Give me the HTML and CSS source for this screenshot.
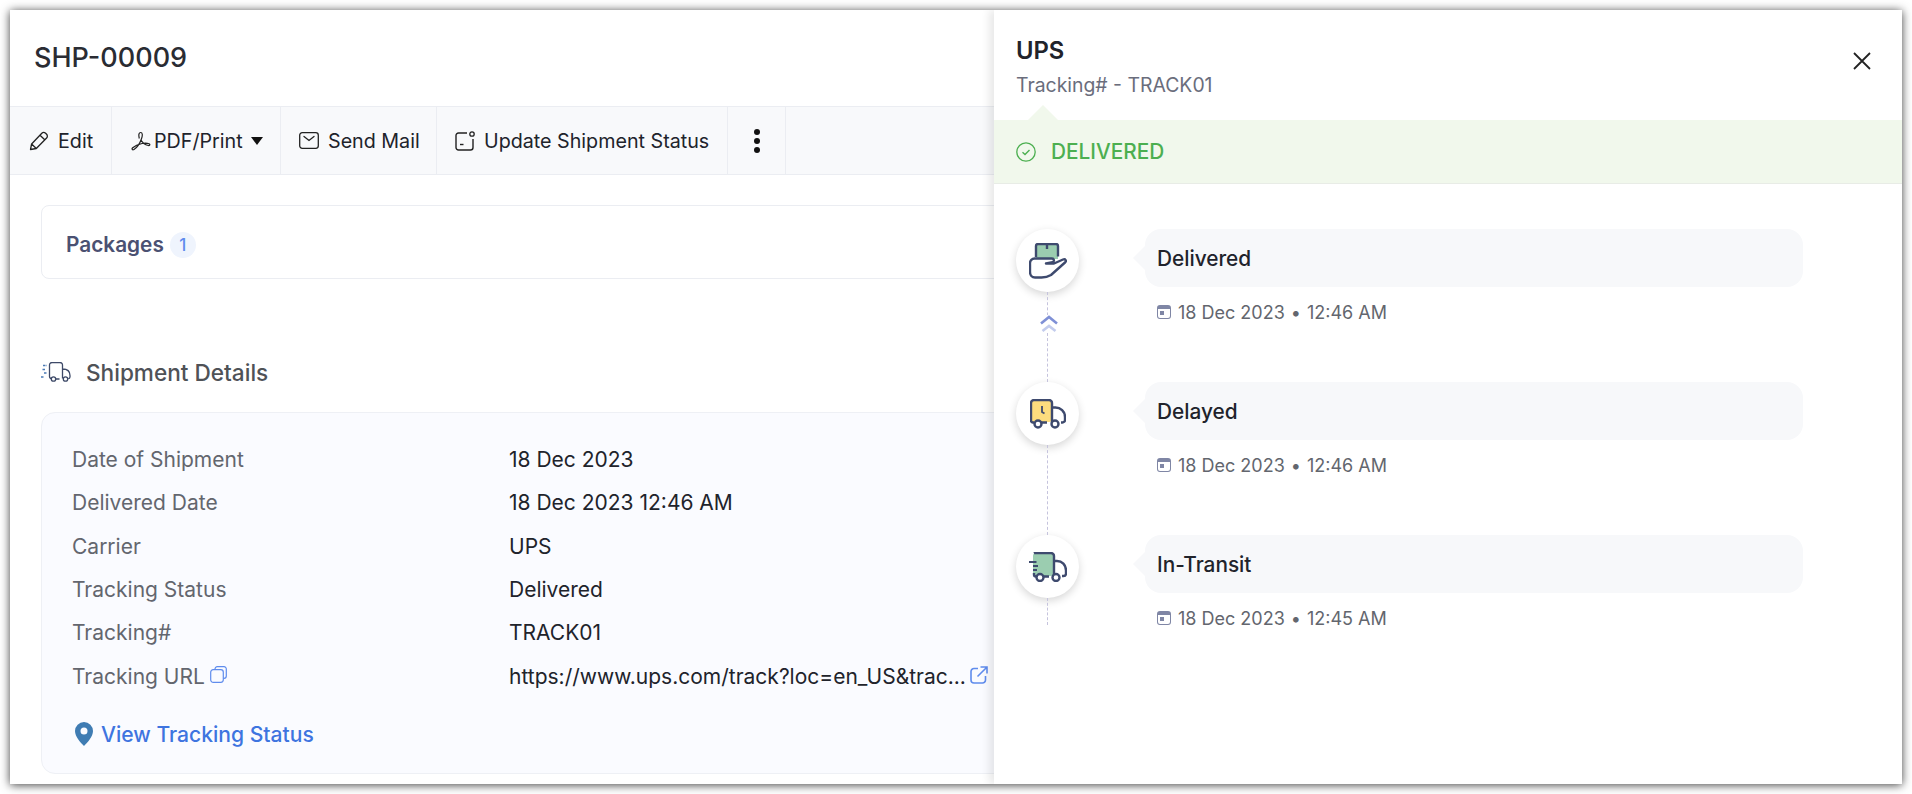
FILE: index.html
```html
<!DOCTYPE html>
<html lang="en">
<head>
  <meta charset="UTF-8">
  <title>SHP-00009</title>
  <link rel="stylesheet" href="styles.css">
</head>
<body>

<div class="window">
  <div class="page">
    <h1 class="page-title">SHP-00009</h1>

    <div class="toolbar">
      <div class="tool tool-edit">
        <svg class="tool-icon" width="20" height="20" viewBox="0 0 20 20"><path d="M1.500 18.500 2.600 13 12.800 2.300c1-1 2.700-1 3.800 0l1 1c1 1 1 2.700 0 3.700L7.300 17.500 1.500 18.500ZM2.600 13l4.700 4.500M11 4.200l5 4.800" fill="none" stroke="#222" stroke-width="1.300" stroke-linejoin="round"/></svg>
        Edit
      </div>
      <div class="tool tool-pdf">
        <svg class="pdf-icon" width="20" height="20" viewBox="0 0 20 20"><path d="M8.300 7.500C7.300 3.500 8 1.500 9.700 1.500s2.200 2.500.7 6.500C9 12 6 16.500 3 18.500c-1.500 1-2.700-.5-1.300-1.800 2-1.800 6-3.500 9.300-4.200 2.500-.5 5-.5 7 .3 1.500.6.700 2-.8 1.700-3-.6-6-3-7.500-6" fill="none" stroke="#222" stroke-width="1.200" stroke-linejoin="round"/></svg>
        PDF/Print
        <span class="caret"></span>
      </div>
      <div class="tool tool-mail">
        <svg class="tool-icon" width="20" height="18" viewBox="0 0 20 18"><rect x=".7" y=".7" width="18.600" height="15.600" rx="2.500" fill="none" stroke="#222" stroke-width="1.300"/><path d="M5 4.500 10 8.500 15 4.500" fill="none" stroke="#222" stroke-width="1.300" stroke-linecap="round"/></svg>
        Send Mail
      </div>
      <div class="tool tool-status">
        <svg class="tool-icon" width="20" height="20" viewBox="0 0 20 20"><path d="M12 2H3.500A2.500 2.500 0 0 0 1 4.500v12A2.500 2.500 0 0 0 3.500 19h12a2.500 2.500 0 0 0 2.500-2.500V8" fill="none" stroke="#222" stroke-width="1.400"/><circle cx="17" cy="3" r="2.200" fill="none" stroke="#222" stroke-width="1.300"/><path d="M5 13.500h3.500" stroke="#222" stroke-width="1.400"/></svg>
        Update Shipment Status
      </div>
      <div class="tool tool-more"><span class="kebab"></span></div>
    </div>

    <div class="packages">
      <span class="packages-label">Packages</span>
      <span class="count-badge">1</span>
    </div>

    <div class="section-head">
      <svg width="30" height="20" viewBox="0 0 30 20"><path d="M2 3.500h4M1.500 7.500h3M3 11h3M0 15h3" stroke="#4a7ab5" stroke-width="1.400" fill="none" stroke-dasharray="2.500 1"/><path d="M11 16.500a2 2 0 0 1-2.500-2V3a2.500 2.500 0 0 1 2.500-2.500h8A2.500 2.500 0 0 1 21.500 3v13.500M14 17h4.500M21.500 7c4 0 7.500 2 7.500 6.500v1.500a1.800 1.800 0 0 1-1.800 1.700" fill="none" stroke="#3e4a68" stroke-width="1.300"/><circle cx="12.500" cy="17" r="2.200" fill="none" stroke="#3e4a68" stroke-width="1.300"/><circle cx="24.500" cy="17" r="2.200" fill="none" stroke="#3e4a68" stroke-width="1.300"/></svg>
      <h2 class="section-title">Shipment Details</h2>
    </div>

    <div class="details">
      <div class="detail-row"><span class="detail-label">Date of Shipment</span><span>18 Dec 2023</span></div>
      <div class="detail-row"><span class="detail-label">Delivered Date</span><span>18 Dec 2023 12:46 AM</span></div>
      <div class="detail-row"><span class="detail-label">Carrier</span><span>UPS</span></div>
      <div class="detail-row"><span class="detail-label">Tracking Status</span><span>Delivered</span></div>
      <div class="detail-row"><span class="detail-label">Tracking#</span><span>TRACK01</span></div>
      <div class="detail-row">
        <span class="detail-label">Tracking URL
          <svg class="copy-icon" width="17" height="17" viewBox="0 0 17 17"><path d="M5 3.500V3a2.300 2.300 0 0 1 2.300-2.300H14A2.300 2.300 0 0 1 16.300 3v7a2.300 2.300 0 0 1-2.300 2.300h-.5" fill="none" stroke="#5f8ced" stroke-width="1.200"/><rect x=".7" y="3.700" width="12.600" height="12.600" rx="2.500" fill="none" stroke="#5f8ced" stroke-width="1.200"/></svg>
        </span>
        <span class="url-value">https://www.ups.com/track?loc=en_US&amp;trac...
          <svg class="link-icon" width="18" height="18" viewBox="0 0 18 18"><path d="M8 2.500H4A3 3 0 0 0 1 5.500v8.500a3 3 0 0 0 3 3h8.500a3 3 0 0 0 3-3v-4" fill="none" stroke="#5f8ced" stroke-width="1.600"/><path d="M7.500 10.500 16.300 1.700M10.500 1h6.500v6.500" fill="none" stroke="#5f8ced" stroke-width="1.600"/></svg>
        </span>
      </div>
      <div class="view-tracking">
        <svg width="18" height="24" viewBox="0 0 18 24"><path fill-rule="evenodd" d="M9 0a9 9 0 0 1 9 9c0 5.500-5.500 11.500-9 15C5.500 20.500 0 14.500 0 9a9 9 0 0 1 9-9Zm0 5.500a3.500 3.500 0 1 0 0 7 3.500 3.500 0 0 0 0-7Z" fill="#3f7cb3"/></svg>
        View Tracking Status
      </div>
    </div>
  </div>

  <aside class="panel">
    <div class="panel-head">
      <div>
        <div class="carrier">UPS</div>
        <div class="tracking-no">Tracking# - TRACK01</div>
      </div>
      <svg class="close-icon" width="18" height="18" viewBox="0 0 18 18"><path d="M1 1 17 17M17 1 1 17" stroke="#222" stroke-width="1.800" fill="none"/></svg>
    </div>

    <div class="status-bar">
      <svg width="20" height="20" viewBox="0 0 20 20"><circle cx="10" cy="10" r="9.200" fill="none" stroke="#4caf50" stroke-width="1.300"/><path d="M6.500 10.300 9 12.500 13.500 8" fill="none" stroke="#4caf50" stroke-width="1.400"/></svg>
      DELIVERED
    </div>

    <div class="timeline">
      <div class="event">
        <div class="event-marker">
          <div class="event-icon">
            <svg width="38" height="36" viewBox="0 0 38 36"><path d="M7 2.500a2 2 0 0 1 2-2h18a2 2 0 0 1 2 2V16H7Z" fill="#9bcdb0"/><path d="M7 14V3a2 2 0 0 1 2-2h18a2 2 0 0 1 2 2v10.500M18 1v5" fill="none" stroke="#3e4a6e" stroke-width="2.400"/><path d="M1 29V20a4.500 4.500 0 0 1 4.500-4.500H23c2 0 2.800 2.800.5 3.800L17 20.500h8l9-4c2.500-1 3.800 1.500 2 3L22 32c-3 1.800-6 2.500-9.500 2.500H6C3 34.500 1 32 1 29Z" fill="#fff" stroke="#3e4a6e" stroke-width="2.400" stroke-linejoin="round"/></svg>
          </div>
          <div class="event-line">
            <svg class="chevrons" width="18" height="18" viewBox="0 0 18 18"><path d="M1 8.500 9 2l8 6.500" fill="none" stroke="#7f90d6" stroke-width="2.600"/><path d="M2.500 16 9 11l6.500 5" fill="none" stroke="#c3cced" stroke-width="2.600"/></svg>
          </div>
        </div>
        <div class="event-body">
          <div class="event-bubble">Delivered</div>
          <div class="event-time"><span class="cal-icon"></span>18 Dec 2023 <span class="dot">•</span> 12:46 AM</div>
        </div>
      </div>

      <div class="event">
        <div class="event-marker">
          <div class="event-icon">
            <svg width="36" height="30" viewBox="0 0 36 30"><rect x="1" y="1" width="21" height="22" rx="3" fill="#fcdc7e"/><path d="M4 23.500H3a2 2 0 0 1-2-2V4a3 3 0 0 1 3-3h15a3 3 0 0 1 3 3v19.500M11 23.500h6M22 8.500h3.500c5 0 9.500 4 9.500 9.500v3a2.500 2.500 0 0 1-2.500 2.500H31" fill="none" stroke="#3e4a6e" stroke-width="2.400"/><path d="M12 7v6l2.500 1.500" fill="none" stroke="#3e4a6e" stroke-width="1.800"/><circle cx="8" cy="25" r="3.500" fill="#fff" stroke="#3e4a6e" stroke-width="2.400"/><circle cx="25" cy="25" r="3.500" fill="#fff" stroke="#3e4a6e" stroke-width="2.400"/></svg>
          </div>
          <div class="event-line"></div>
        </div>
        <div class="event-body">
          <div class="event-bubble">Delayed</div>
          <div class="event-time"><span class="cal-icon"></span>18 Dec 2023 <span class="dot">•</span> 12:46 AM</div>
        </div>
      </div>

      <div class="event">
        <div class="event-marker">
          <div class="event-icon">
            <svg width="38" height="30" viewBox="0 0 38 30"><rect x="4" y="1" width="21" height="23" rx="3" fill="#9bcdb0"/><path d="M7 1h15a3 3 0 0 1 3 3v19.500M14 24.500h6M25 9h3c5 0 9 4 9 9.500v3a2.500 2.500 0 0 1-2.500 2.500H33M5 21v1.500a2 2 0 0 0 2 2M5 1.500A3 3 0 0 1 7 1" fill="none" stroke="#3e4a6e" stroke-width="2.400"/><path d="M0 10h7.500M4 14h5M4 18h4" stroke="#3e4a6e" stroke-width="2.200"/><circle cx="11" cy="25.500" r="3.500" fill="#fff" stroke="#3e4a6e" stroke-width="2.400"/><circle cx="27" cy="25.500" r="3.500" fill="#fff" stroke="#3e4a6e" stroke-width="2.400"/></svg>
          </div>
          <div class="event-line event-line-short"></div>
        </div>
        <div class="event-body">
          <div class="event-bubble">In-Transit</div>
          <div class="event-time"><span class="cal-icon"></span>18 Dec 2023 <span class="dot">•</span> 12:45 AM</div>
        </div>
      </div>
    </div>
  </aside>
</div>

</body>
</html>
```

FILE: styles.css
```css
* {
  box-sizing: border-box;
}
html, body {
  height: 100%;
}
body {
  margin: 0;
  padding: 10px;
  background-color: #ffffff;
  font-family: Inter, "Liberation Sans", sans-serif;
  font-size: 18px;
  color: #21232b;
}
.window {
  position: relative;
  height: 774px;
  background-color: #ffffff;
  overflow: hidden;
  box-shadow: 0 1px 9px rgba(0, 0, 0, 0.75);
}

/* left page */
.page-title {
  margin: 0;
  padding: 31px 0 0 24px;
  height: 96px;
  font-size: 27px;
  line-height: 34px;
  font-weight: 500;
  color: #2a2c33;
}
.toolbar {
  display: flex;
  height: 69px;
  background-color: #f8f9fb;
  border-top: 1px solid #ebedf2;
  border-bottom: 1px solid #ebedf2;
}
.tool {
  display: flex;
  align-items: center;
  border-right: 1px solid #ebedf2;
  white-space: nowrap;
  font-size: 19.700px;
}
.tool-icon {
  margin-right: 9px;
}
.tool-edit {
  width: 102px;
  padding-left: 19px;
}
.tool-pdf {
  width: 169px;
  padding-left: 19px;
}
.pdf-icon {
  margin-right: 3px;
}
.caret {
  margin-left: 8px;
  border-left: 6px solid transparent;
  border-right: 6px solid transparent;
  border-top: 8px solid #111;
}
.tool-mail {
  width: 156px;
  padding-left: 18px;
}
.tool-status {
  width: 291px;
  padding-left: 18px;
}
.tool-more {
  width: 58px;
  justify-content: center;
}
.kebab {
  width: 6px;
  height: 6px;
  border-radius: 50%;
  background-color: #111;
  box-shadow: 0 -9px 0 #111, 0 9px 0 #111;
}
.packages {
  display: flex;
  align-items: center;
  margin: 30px 0 0 31px;
  height: 74px;
  padding: 5px 0 0 24px;
  border: 1px solid #ebedf2;
  border-radius: 8px;
}
.packages-label {
  font-weight: 600;
  font-size: 20.800px;
  color: #4b5172;
}
.count-badge {
  display: flex;
  align-items: center;
  justify-content: center;
  width: 26px;
  height: 26px;
  margin-left: 6px;
  border-radius: 50%;
  background-color: #eff4fd;
  color: #5f8ced;
  font-size: 17px;
  font-weight: 500;
}
.section-head {
  display: flex;
  align-items: center;
  gap: 15px;
  margin: 78px 0 0 31px;
  height: 30px;
}
.section-title {
  margin: 0;
  font-size: 22.600px;
  font-weight: 500;
  color: #4f5257;
}
.details {
  margin: 25px 0 0 31px;
  height: 362px;
  padding: 25px 30px 0;
  background-color: #fafbff;
  border: 1px solid #eef0f5;
  border-radius: 14px;
}
.detail-row {
  display: flex;
  align-items: center;
  height: 43.300px;
  font-size: 21px;
}
.detail-label {
  display: flex;
  align-items: center;
  gap: 5px;
  width: 437px;
  color: #63666e;
}
.url-value {
  display: flex;
  align-items: center;
  gap: 4px;
  white-space: nowrap;
}
.copy-icon {
  margin-top: -4px;
}
.link-icon {
  margin-top: -3px;
}
.view-tracking {
  display: flex;
  align-items: center;
  gap: 8px;
  margin: 24px 0 0 3px;
  color: #3e74e0;
  font-size: 21.100px;
  font-weight: 500;
}

/* tracking panel */
.panel {
  position: absolute;
  top: 0;
  right: 0;
  bottom: 0;
  width: 908px;
  background-color: #ffffff;
  box-shadow: -5px 0 8px rgba(0, 0, 0, 0.09);
}
.panel-head {
  display: flex;
  justify-content: space-between;
  height: 110px;
  padding: 24px 31px 0 22px;
}
.carrier {
  font-size: 23.800px;
  line-height: 34px;
  font-weight: 600;
  color: #21232b;
}
.tracking-no {
  margin-top: 2px;
  font-size: 19.400px;
  line-height: 30px;
  color: #6a6d7c;
}
.close-icon {
  margin: 18px 0 0 0;
}
.status-bar {
  position: relative;
  display: flex;
  align-items: center;
  gap: 15px;
  height: 64px;
  padding-left: 22px;
  background-color: #f1f8ec;
  border-bottom: 1px solid #e8ece6;
  color: #4caf50;
  font-size: 20.800px;
  font-weight: 500;
}
.status-bar::before {
  content: "";
  position: absolute;
  top: -15px;
  left: 34px;
  border-left: 15px solid transparent;
  border-right: 15px solid transparent;
  border-bottom: 15px solid #f1f8ec;
}
.timeline {
  padding: 45px 0 0 22px;
}
.event {
  display: flex;
  height: 153px;
}
.event-marker {
  display: flex;
  flex-direction: column;
  align-items: center;
  width: 63px;
}
.event-icon {
  display: flex;
  align-items: center;
  justify-content: center;
  flex: none;
  width: 63px;
  height: 63px;
  border-radius: 50%;
  background-color: #ffffff;
  box-shadow: 0 3px 9px rgba(0, 0, 0, 0.16);
}
.event-line {
  position: relative;
  width: 0;
  height: 90px;
  border-left: 1px dashed #c5c3dd;
}
.event-line-short {
  height: 27px;
}
.chevrons {
  position: absolute;
  top: 23px;
  left: -8px;
  background-color: #ffffff;
}
.event-body {
  margin-left: 66px;
}
.event-bubble {
  position: relative;
  display: flex;
  align-items: center;
  width: 658px;
  height: 58px;
  padding-left: 12px;
  background-color: #f7f8fa;
  border-radius: 16px;
  font-size: 20.800px;
  font-weight: 500;
}
.event-bubble::before {
  content: "";
  position: absolute;
  top: 17px;
  left: -12px;
  border-top: 12px solid transparent;
  border-bottom: 12px solid transparent;
  border-right: 12px solid #f7f8fa;
}
.event-time {
  display: flex;
  align-items: center;
  margin: 13px 0 0 12px;
  height: 24px;
  font-size: 18px;
  color: #63666e;
}
.cal-icon {
  width: 14px;
  height: 14px;
  margin-right: 7px;
  border: 1.500px solid #7f86a5;
  border-top-width: 4px;
  border-radius: 3px;
  background: radial-gradient(#7f86a5 0 0) 2px 2px / 4px 4px no-repeat;
}
.dot {
  margin: 0 6px;
}
```
